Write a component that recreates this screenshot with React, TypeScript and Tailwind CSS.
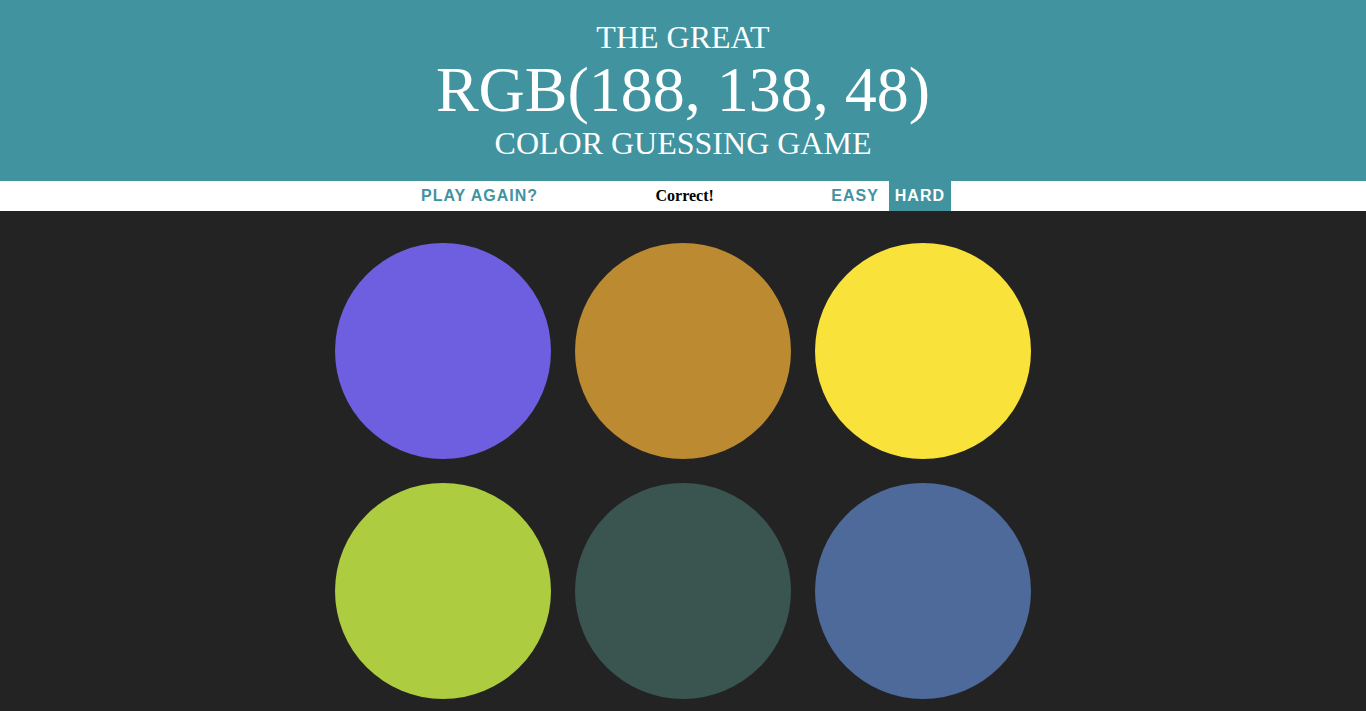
import React from 'react';

const colors = ['#6e5fe0', '#bc8a30', '#f9e23a', '#adcc40', '#3a5550', '#4e6a9b'];

export default function App() {
  return (
    <div className="min-h-[711px] bg-[#232323] font-['Liberation_Serif',serif]">
      <h1 className="bg-[#4193a0] py-5 text-center font-normal uppercase leading-[1.1] text-white">
        <div className="text-[32px]">The Great</div>
        <div className="text-[64px]">RGB(188, 138, 48)</div>
        <div className="text-[32px]">Color Guessing Game</div>
      </h1>
      <div className="flex h-[30px] items-stretch justify-center gap-[4px] bg-white text-base">
        <button className="px-[6px] font-['Liberation_Sans',sans-serif] font-bold uppercase tracking-[1px] text-[#4193a0]">
          Play Again?
        </button>
        <span className="flex w-[20%] items-center justify-center font-bold text-black">Correct!</span>
        <button className="px-[6px] font-['Liberation_Sans',sans-serif] font-bold uppercase tracking-[1px] text-[#4193a0]">
          Easy
        </button>
        <button className="bg-[#4193a0] px-[6px] font-['Liberation_Sans',sans-serif] font-bold uppercase tracking-[1px] text-white">
          Hard
        </button>
      </div>
      <div className="mx-auto mt-5 grid w-[720px] grid-cols-3">
        {colors.map((c) => (
          <div key={c} className="m-3 h-[216px] w-[216px] rounded-full" style={{ backgroundColor: c }} />
        ))}
      </div>
    </div>
  );
}
